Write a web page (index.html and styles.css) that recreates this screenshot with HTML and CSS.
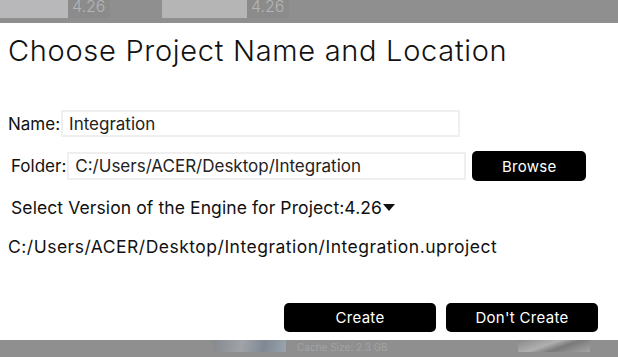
FILE: index.html
```html
<!DOCTYPE html>
<html lang="en">
<head>
  <meta charset="UTF-8">
  <title>Choose Project Name and Location</title>
  <link rel="stylesheet" href="styles.css">
</head>
<body>
  <div class="backdrop-top">
    <div class="tile"><span class="thumb thumb-a"></span><span class="ver">4.26</span></div>
    <div class="tile"><span class="thumb thumb-b"></span><span class="ver">4.26</span></div>
  </div>
  <div class="dialog">
    <h1>Choose Project Name and Location</h1>
    <div class="row row-name">
      <label>Name:</label>
      <input class="field field-name" type="text" value="Integration">
    </div>
    <div class="row row-folder">
      <label>Folder:</label>
      <input class="field field-folder" type="text" value="C:/Users/ACER/Desktop/Integration">
      <button class="button browse">Browse</button>
    </div>
    <div class="row row-version">
      <span>Select Version of the Engine for Project:</span><span class="version">4.26</span><span class="caret"></span>
    </div>
    <p class="path">C:/Users/ACER/Desktop/Integration/Integration.uproject</p>
    <div class="actions">
      <button class="button action">Create</button>
      <button class="button action">Don't Create</button>
    </div>
  </div>
  <div class="backdrop-bottom">
    <span class="shot shot-a"></span>
    <span class="cache">Cache Size: 2.3 GB</span>
    <span class="shot shot-b"></span>
  </div>
</body>
</html>
```

FILE: styles.css
```css
html, body {
  margin: 0;
  height: 100%;
}
body {
  background: #8f8f8f;
  font-family: Inter, Roboto, 'Liberation Sans', sans-serif;
  color: #111;
  overflow: hidden;
}
.backdrop-top {
  height: 18px;
  padding-bottom: 5px;
  display: flex;
  gap: 52px;
}
.tile {
  display: flex;
}
.thumb {
  display: block;
  height: 18px;
  background: #b8b8bb;
}
.thumb-a {
  width: 68px;
}
.thumb-b {
  width: 85px;
  background: #b5b5b5;
}
.ver {
  display: block;
  width: 42px;
  height: 18px;
  background: #8b8b8b;
  color: #b4b4b4;
  font-size: 16px;
  font-weight: 300;
  line-height: 12px;
  padding-left: 4px;
  box-sizing: border-box;
  overflow: hidden;
}
.dialog {
  background: #fff;
  height: 317px;
  position: relative;
}
h1 {
  margin: 0;
  padding: 10px 0 0 8px;
  font-size: 29px;
  font-weight: 300;
  line-height: 36px;
  letter-spacing: 0.7px;
}
.row {
  display: flex;
  align-items: center;
  font-size: 17px;
}
.row label {
  margin-right: 1px;
}
.row-name {
  margin-top: 41px;
  padding-left: 8px;
}
.field {
  border: 2px solid #efefef;
  height: 27px;
  box-sizing: border-box;
  font-family: inherit;
  font-size: 17px;
  color: #222;
  padding: 0 6px;
  outline: none;
}
.field-name {
  width: 399px;
}
.row-folder {
  margin-top: 14px;
  padding-left: 11px;
}
.field-folder {
  width: 399px;
  height: 28px;
}
.button {
  background: #000;
  color: #fff;
  border: none;
  border-radius: 5px;
  font-family: inherit;
  font-size: 15px;
  font-weight: 400;
  letter-spacing: 0.3px;
  padding: 0;
}
.browse {
  width: 114px;
  height: 30px;
  margin-left: 6px;
}
.row-version {
  margin-top: 16px;
  padding-left: 11px;
  font-size: 17.5px;
  letter-spacing: 0.1px;
}
.caret {
  width: 0;
  height: 0;
  border-left: 6px solid transparent;
  border-right: 6px solid transparent;
  border-top: 7px solid #111;
  margin-left: 1px;
}
.path {
  margin: 18px 0 0 8px;
  font-size: 17.5px;
  letter-spacing: 0.5px;
}
.actions {
  position: absolute;
  right: 20px;
  bottom: 8px;
  display: flex;
  gap: 10px;
}
.action {
  width: 152px;
  height: 29px;
}
.backdrop-bottom {
  height: 17px;
  position: relative;
}
.shot {
  position: absolute;
  top: 0;
  height: 12px;
  background: linear-gradient(100deg, #868a90, #a0a3a8 40%, #7f8893 70%, #9aa5b0);
}
.shot-a {
  left: 213px;
  width: 73px;
}
.shot-b {
  left: 518px;
  width: 72px;
  background: linear-gradient(160deg, #8a8a8a, #b0b0b0 40%, #7a7a7a 60%, #a5a5a5);
}
.cache {
  position: absolute;
  left: 297px;
  top: 1px;
  font-size: 10px;
  color: #a3a3a3;
}
```
